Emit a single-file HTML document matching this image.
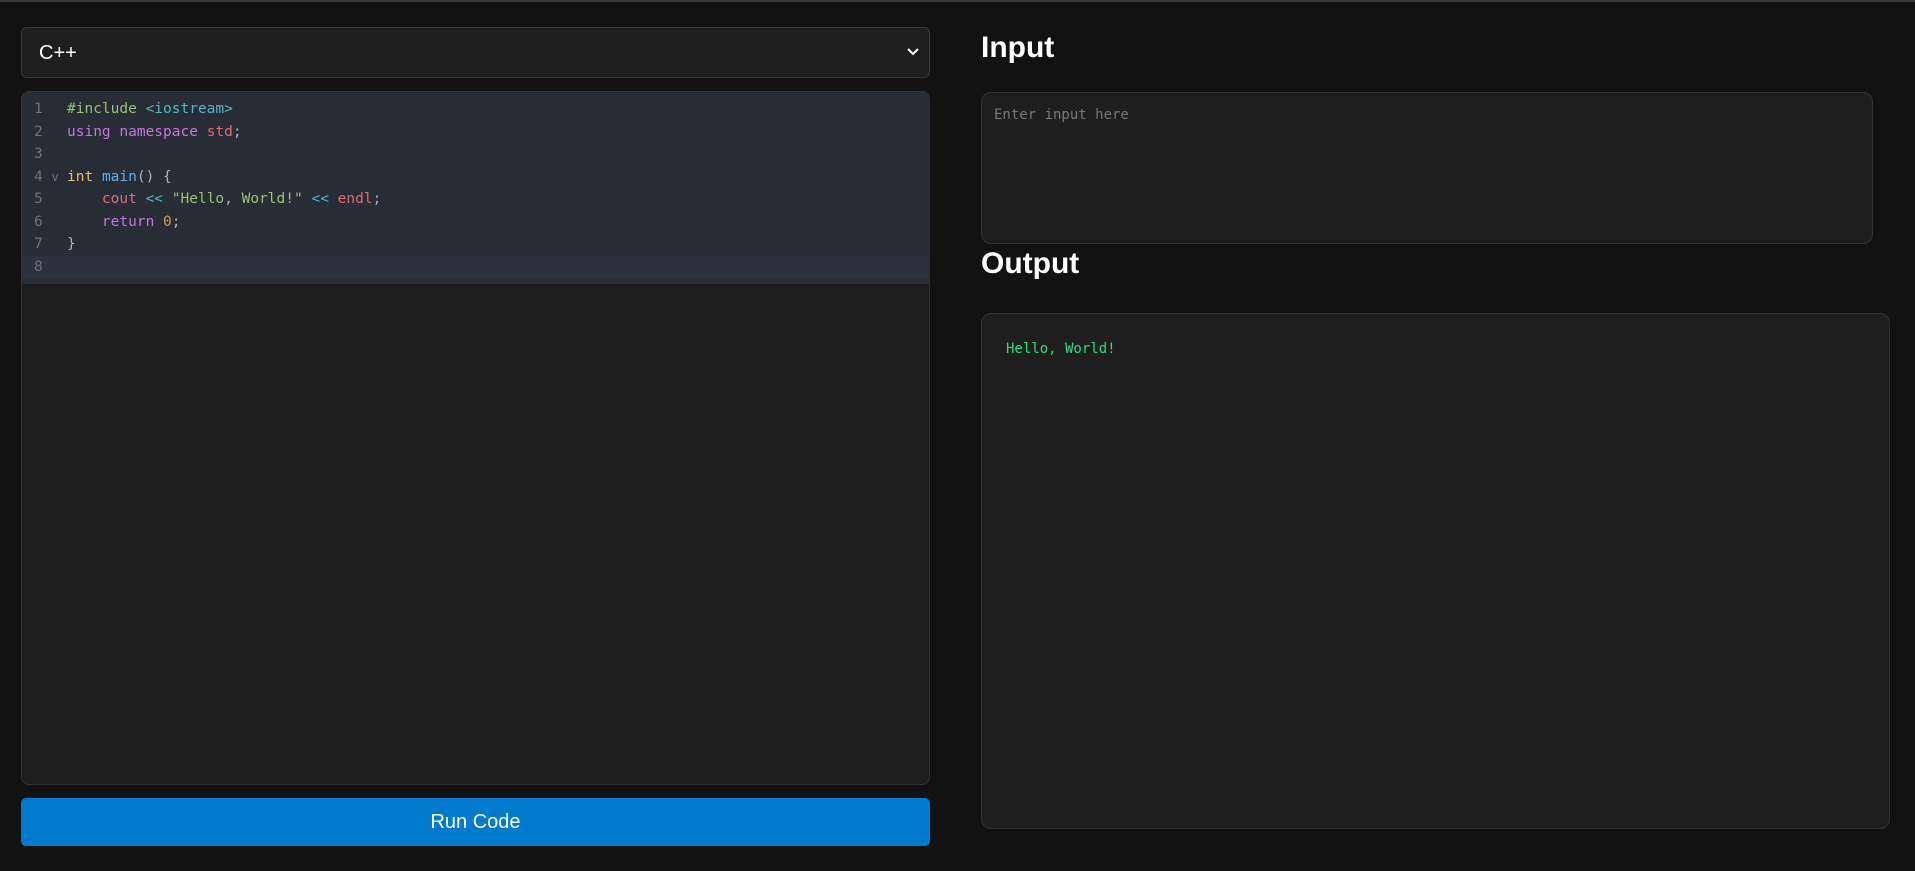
<!DOCTYPE html>
<html><head><meta charset="utf-8"><style>
*{box-sizing:border-box;margin:0;padding:0}
body{width:1915px;height:871px;background:#121212;font-family:"Liberation Sans",sans-serif;position:relative;overflow:hidden}
.top{position:absolute;left:0;top:0;width:1915px;height:2px;background:#3a3a3a}
.sel{position:absolute;left:21px;top:27px;width:909px;height:51px;background:#1e1e1e;border:1px solid #3a3a3a;border-radius:6px;color:#fff;font-size:20px;padding:14px 17px}
.sel svg{position:absolute;right:10px;top:20px}
.ed{position:absolute;left:21px;top:91px;width:909px;height:694px;background:#1e1e1e;border:1px solid #333;border-radius:8px;overflow:hidden}
.code{background:#282c34;height:192px;padding-top:6px;font-family:"DejaVu Sans Mono","Liberation Mono",monospace;font-size:14.5px;position:relative}
.l{height:22.5px;line-height:22.5px;white-space:pre;position:relative}
.n{position:absolute;left:12px;color:#6b7280;width:20px}
.t{position:absolute;left:45px;color:#abb2bf}
.l8{background:#2c313c}
.k{color:#c678dd}.y{color:#e5c07b}.b{color:#61afef}.c{color:#56b6c2}.r{color:#e06c75}.g{color:#98c379}.o{color:#d19a66}.inc{color:#98c379}
.btn{position:absolute;left:21px;top:798px;width:909px;height:48px;background:#007acc;border-radius:5px;color:#fff;font-size:20px;text-align:center;line-height:48px}
h2{position:absolute;left:981px;color:#fff;font-size:30px;font-weight:bold}
.ta{position:absolute;left:981px;top:92px;width:892px;height:152px;background:#1e1e1e;border:1px solid #333;border-radius:10px;padding:14px 12px;color:#777;font-family:"DejaVu Sans Mono","Liberation Mono",monospace;font-size:14px}
.out{position:absolute;left:981px;top:313px;width:909px;height:516px;background:#1e1e1e;border:1px solid #333;border-radius:10px;padding:27px 24px;color:#22e07a;font-family:"DejaVu Sans Mono","Liberation Mono",monospace;font-size:14px}
</style></head><body>
<div class="top"></div>
<div class="sel">C++<svg width="12" height="8" viewBox="0 0 12 8"><path d="M1 1l5 5 5-5" stroke="#fff" stroke-width="2" fill="none"/></svg></div>
<div class="ed"><div class="code">
<div class="l"><span class="n">1</span><span class="t"><span class="inc">#include</span> <span class="c">&lt;iostream&gt;</span></span></div>
<div class="l"><span class="n">2</span><span class="t"><span class="k">using namespace</span> <span class="r">std</span>;</span></div>
<div class="l"><span class="n">3</span></div>
<div class="l"><span class="n">4 <small>v</small></span><span class="t"><span class="y">int</span> <span class="b">main</span>() {</span></div>
<div class="l"><span class="n">5</span><span class="t">    <span class="r">cout</span> <span class="c">&lt;&lt;</span> <span class="g">"Hello, World!"</span> <span class="c">&lt;&lt;</span> <span class="r">endl</span>;</span></div>
<div class="l"><span class="n">6</span><span class="t">    <span class="k">return</span> <span class="o">0</span>;</span></div>
<div class="l"><span class="n">7</span><span class="t">}</span></div>
<div class="l l8"><span class="n">8</span></div>
</div></div>
<div class="btn">Run Code</div>
<h2 style="top:31px">Input</h2>
<div class="ta">Enter input here</div>
<h2 style="top:247px">Output</h2>
<div class="out">Hello, World!</div>
</body></html>
